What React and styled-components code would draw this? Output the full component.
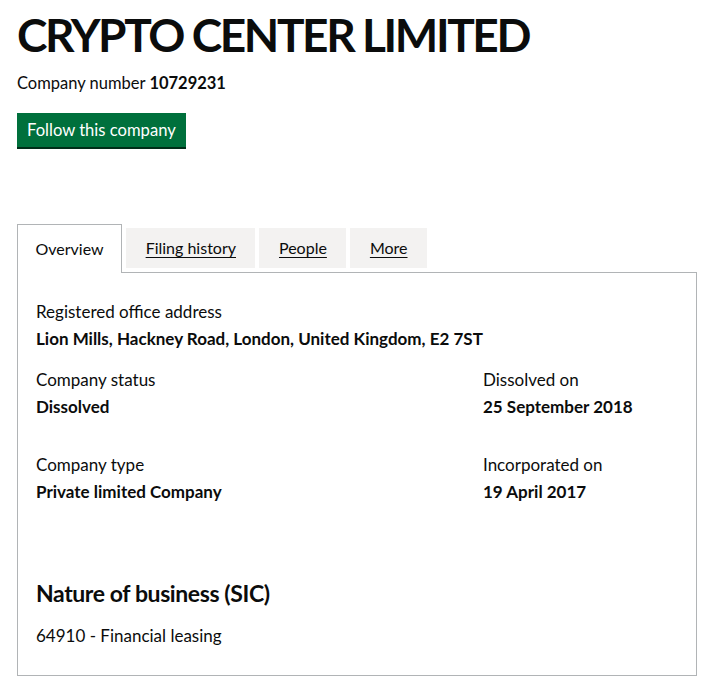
import React from "react";
import styled, { createGlobalStyle } from "styled-components";

const Global = createGlobalStyle`
  html, body { margin: 0; padding: 0; background: #ffffff; }
  body {
    font-family: Lato, "Noto Sans", "Liberation Sans", sans-serif;
    color: #0b0c0c;
    -webkit-font-smoothing: antialiased;
  }
`;

const Page = styled.main`
  padding: 10px 26px 0 17px;
`;

const Title = styled.h1`
  margin: 0;
  font-size: 46px;
  line-height: 50px;
  font-weight: 700;
  letter-spacing: -2.4px;
`;

const Meta = styled.p`
  margin: 13px 0 0;
  font-size: 16.5px;
  line-height: 20px;
  strong { font-weight: 700; }
`;

const FollowButton = styled.button`
  margin-top: 20px;
  display: inline-block;
  font-family: inherit;
  font-size: 16.6px;
  line-height: 20px;
  color: #ffffff;
  background: #00703c;
  border: 0;
  border-radius: 0;
  padding: 7px 10px;
  box-shadow: 0 2px 0 #002d18;
  cursor: pointer;
`;

const Tabs = styled.section`
  margin-top: 77px;
`;

const TabList = styled.ul`
  list-style: none;
  margin: 0;
  padding: 0;
  display: flex;
  align-items: flex-end;
  border-bottom: 1px solid #b1b4b6;
`;

const Tab = styled.li`
  margin-right: 4px;
  font-size: 16px;
  line-height: 20px;
  ${({ $selected }) =>
    $selected
      ? `
    padding: 14px 17.5px 14px;
    margin-bottom: -1px;
    border: 1px solid #b1b4b6;
    border-bottom: 0;
    background: #ffffff;
  `
      : `
    padding: 10px 19.5px;
    margin-bottom: 4px;
    background: #f3f2f1;
  `}
`;

const TabLink = styled.a`
  color: #0b0c0c;
  text-decoration: ${({ $selected }) => ($selected ? "none" : "underline")};
  text-decoration-thickness: 1px;
  text-underline-offset: 3px;
`;

const Panel = styled.div`
  border: 1px solid #b1b4b6;
  border-top: 0;
  padding: 29px 19px 29px 18px;
`;

const Row = styled.div`
  display: grid;
  grid-template-columns: 447px 1fr;
  margin-top: ${({ $gap }) => $gap || 0}px;
`;

const Field = styled.dl`
  margin: 0;
`;

const Label = styled.dt`
  font-size: 17px;
  line-height: 20px;
`;

const Value = styled.dd`
  margin: 7px 0 0;
  font-size: 17px;
  line-height: 20px;
  font-weight: 700;
`;

const Heading = styled.h2`
  margin: 76px 0 0;
  font-size: 23px;
  line-height: 30px;
  font-weight: 700;
  letter-spacing: -0.4px;
`;

const Body = styled.p`
  margin: 18px 0 0;
  font-size: 17px;
  line-height: 20px;
`;

const tabs = [
  { label: "Overview", selected: true },
  { label: "Filing history" },
  { label: "People" },
  { label: "More" },
];

export default function App() {
  return (
    <>
      <Global />
      <Page>
        <Title>CRYPTO CENTER LIMITED</Title>
        <Meta>
          Company number <strong>10729231</strong>
        </Meta>
        <FollowButton>Follow this company</FollowButton>
        <Tabs>
          <TabList>
            {tabs.map((t) => (
              <Tab key={t.label} $selected={t.selected}>
                <TabLink href="#" $selected={t.selected}>
                  {t.label}
                </TabLink>
              </Tab>
            ))}
          </TabList>
          <Panel>
            <Field>
              <Label>Registered office address</Label>
              <Value>Lion Mills, Hackney Road, London, United Kingdom, E2 7ST</Value>
            </Field>
            <Row $gap={21}>
              <Field>
                <Label>Company status</Label>
                <Value>Dissolved</Value>
              </Field>
              <Field>
                <Label>Dissolved on</Label>
                <Value>25 September 2018</Value>
              </Field>
            </Row>
            <Row $gap={38}>
              <Field>
                <Label>Company type</Label>
                <Value>Private limited Company</Value>
              </Field>
              <Field>
                <Label>Incorporated on</Label>
                <Value>19 April 2017</Value>
              </Field>
            </Row>
            <Heading>Nature of business (SIC)</Heading>
            <Body>64910 - Financial leasing</Body>
          </Panel>
        </Tabs>
      </Page>
    </>
  );
}
